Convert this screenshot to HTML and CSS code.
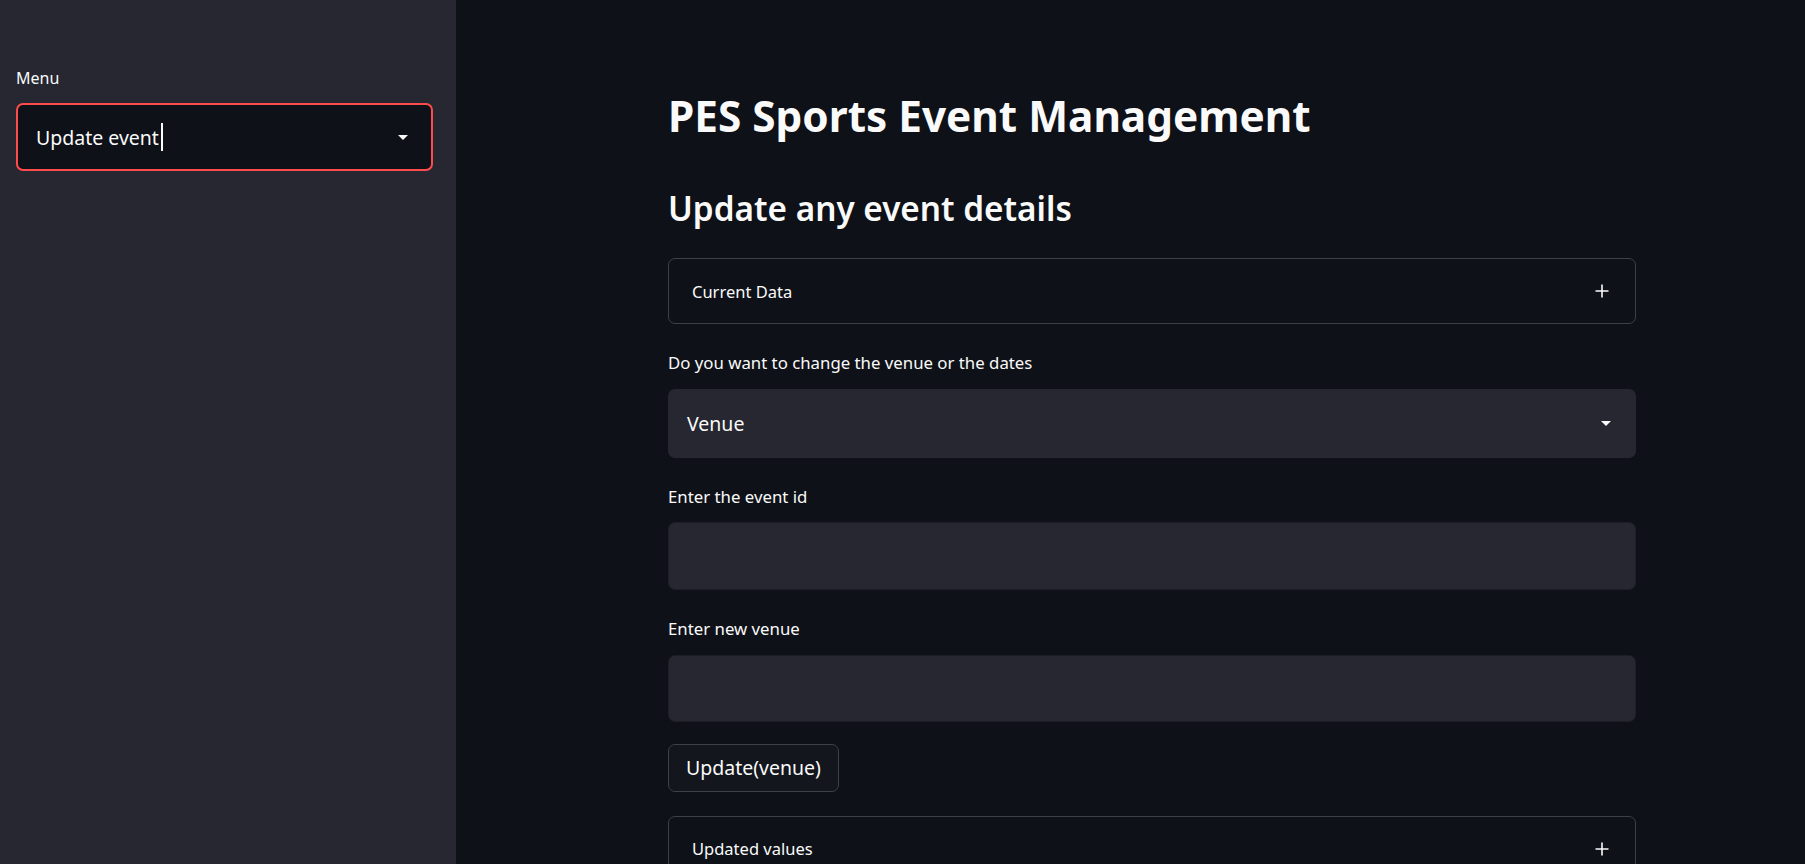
FILE: index.html
```html
<!DOCTYPE html>
<html lang="en">
<head>
<meta charset="utf-8">
<title>PES Sports Event Management</title>
<link rel="stylesheet" href="styles.css">
</head>
<body>
<div class="app">
  <aside class="sidebar">
    <label class="side-label">Menu</label>
    <div class="side-select">
      <span class="side-value">Update event</span><span class="caret-line"></span>
      <svg class="arrow" width="24" height="24" viewBox="0 0 24 24"><path d="M7 10l5 5 5-5z" fill="#fafafa"/></svg>
    </div>
  </aside>
  <main class="main">
    <div class="block">
      <h1 class="title">PES Sports Event Management</h1>
      <h2 class="subtitle">Update any event details</h2>
      <div class="expander">
        <span class="exp-label">Current Data</span>
        <svg class="plus" width="14" height="14" viewBox="0 0 14 14"><path d="M7 0.5v13M0.5 7h13" stroke="#fafafa" stroke-width="1.6"/></svg>
      </div>
      <div class="widget">
        <label class="label">Do you want to change the venue or the dates</label>
        <div class="select">
          <span class="select-value">Venue</span>
          <svg class="arrow" width="24" height="24" viewBox="0 0 24 24"><path d="M7 10l5 5 5-5z" fill="#fafafa"/></svg>
        </div>
      </div>
      <div class="widget">
        <label class="label">Enter the event id</label>
        <div class="input"></div>
      </div>
      <div class="widget">
        <label class="label">Enter new venue</label>
        <div class="input input-last"></div>
      </div>
      <div class="button-row">
        <button class="button">Update(venue)</button>
      </div>
      <div class="expander">
        <span class="exp-label">Updated values</span>
        <svg class="plus" width="14" height="14" viewBox="0 0 14 14"><path d="M7 0.5v13M0.5 7h13" stroke="#fafafa" stroke-width="1.6"/></svg>
      </div>
    </div>
  </main>
</div>
</body>
</html>
```
FILE: styles.css
```css
html, body {
  margin: 0;
  padding: 0;
  height: 100%;
  overflow: hidden;
  background: #0e1117;
  color: #fafafa;
  font-family: "Noto Sans", "Open Sans", sans-serif;
}

.app {
  display: flex;
  height: 100vh;
}

.sidebar {
  width: 456px;
  flex: 0 0 456px;
  box-sizing: border-box;
  background: #262730;
  padding: 67px 23px 0 16px;
  display: flex;
  flex-direction: column;
}

.side-label {
  font-size: 16px;
  line-height: 22px;
  color: #fafafa;
  margin-bottom: 14px;
}

.side-select {
  height: 68px;
  box-sizing: border-box;
  border: 2px solid #ff4b4b;
  border-radius: 7px;
  background: #0e1117;
  display: flex;
  align-items: center;
  padding: 0 16px 0 18px;
}

.side-value {
  font-size: 19.5px;
}

.caret-line {
  display: inline-block;
  width: 2px;
  height: 28px;
  background: #fafafa;
  margin-left: 2px;
}

.arrow {
  margin-left: auto;
  flex: none;
}

.main {
  flex: 1;
  padding: 90px 0 0 212px;
}

.block {
  width: 968px;
  display: flex;
  flex-direction: column;
  gap: 24px;
}

.title {
  margin: 0 0 23px 0;
  font-size: 42.3px;
  line-height: 51px;
  font-weight: 700;
}

.subtitle {
  margin: 0 0 6px 0;
  font-size: 33.3px;
  line-height: 40px;
  font-weight: 600;
}

.expander {
  height: 66px;
  flex: none;
  box-sizing: border-box;
  border: 1px solid #3d4046;
  border-radius: 7px;
  display: flex;
  align-items: center;
  padding: 0 26px 0 23px;
}

.exp-label {
  font-size: 16.5px;
}

.plus {
  margin-left: auto;
}

.widget {
  display: flex;
  flex-direction: column;
}

.label {
  font-size: 16.8px;
  line-height: 24px;
  margin: 3px 0 13.5px 0;
}

.select {
  height: 69px;
  box-sizing: border-box;
  background: #262730;
  border-radius: 7px;
  display: flex;
  align-items: center;
  padding: 0 18px 0 19px;
}

.select-value {
  font-size: 19.5px;
}

.input {
  height: 68px;
  box-sizing: border-box;
  background: #262730;
  border: 1px solid #1c1d25;
  border-radius: 7px;
}

.input-last {
  height: 67px;
}

.button-row {
  display: flex;
  margin-top: -2px;
}

.button {
  height: 48px;
  box-sizing: border-box;
  padding: 0 17px;
  border: 1px solid #3d4046;
  border-radius: 7px;
  background: #13161d;
  color: #fafafa;
  font-family: "Noto Sans", "Open Sans", sans-serif;
  font-size: 19.5px;
  line-height: 1;
}
```
